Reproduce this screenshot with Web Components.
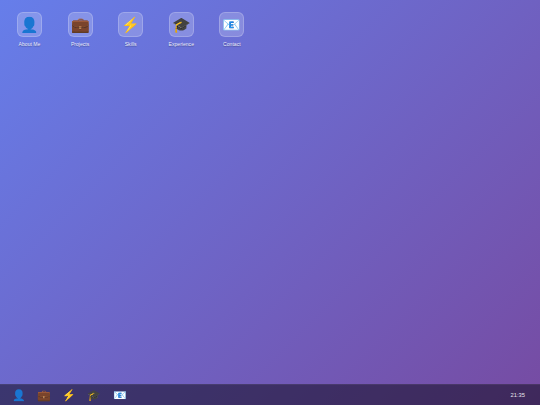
<!DOCTYPE html>
<html>
<head>
<meta charset="UTF-8">
<title>Desktop</title>
<style>
    html, body { margin: 0; height: 100%; overflow: hidden; }
    body { font-family: "Liberation Sans", Arial, sans-serif; }
</style>
</head>
<body>
<desk-top>
    <desk-icon glyph="👤" label="About Me"></desk-icon>
    <desk-icon glyph="💼" label="Projects"></desk-icon>
    <desk-icon glyph="⚡" label="Skills"></desk-icon>
    <desk-icon glyph="🎓" label="Experience"></desk-icon>
    <desk-icon glyph="📧" label="Contact"></desk-icon>
    <task-bar slot="bar" time="21:35">
        <task-item glyph="👤"></task-item>
        <task-item glyph="💼"></task-item>
        <task-item glyph="⚡"></task-item>
        <task-item glyph="🎓"></task-item>
        <task-item glyph="📧"></task-item>
    </task-bar>
</desk-top>
<script>
class DeskTop extends HTMLElement {
    constructor() {
        super();
        this.attachShadow({ mode: 'open' });
    }

    connectedCallback() {
        this.shadowRoot.innerHTML = `
            <style>
                :host { display: flex; flex-direction: column; height: 405px; width: 540px; background: linear-gradient(135deg, #667eea 0%, #764ba2 100%); }
                .icons { flex: 1; display: flex; align-items: flex-start; gap: 10px; padding: 12px 0 0 9.2px; }
            </style>
            <div class="icons"><slot></slot></div>
            <slot name="bar"></slot>
        `;
    }
}

class DeskIcon extends HTMLElement {
    constructor() {
        super();
        this.attachShadow({ mode: 'open' });
    }

    connectedCallback() {
        this.shadowRoot.innerHTML = `
            <style>
                :host { display: flex; flex-direction: column; align-items: center; width: 40.6px; gap: 4px; }
                .tile { box-sizing: border-box; width: 25px; height: 25px; border: 1px solid rgba(255,255,255,0.2); border-radius: 6px; background: rgba(255,255,255,0.2); display: flex; align-items: center; justify-content: center; font-size: 15px; line-height: 1; }
                .label { color: rgba(255,255,255,0.9); font-size: 5.1px; line-height: 6px; white-space: nowrap; text-shadow: 0 1px 1px rgba(0,0,0,0.3); }
            </style>
            <div class="tile">${this.getAttribute('glyph')}</div>
            <div class="label">${this.getAttribute('label')}</div>
        `;
    }
}

class TaskBar extends HTMLElement {
    constructor() {
        super();
        this.attachShadow({ mode: 'open' });
    }

    connectedCallback() {
        this.shadowRoot.innerHTML = `
            <style>
                :host { display: flex; align-items: center; justify-content: space-between; height: 20px; padding: 0 15px 0 8.4px; background: rgba(18,13,35,0.55); border-top: 1px solid rgba(255,255,255,0.06); }
                .items { display: flex; gap: 5px; }
                .clock { color: rgba(255,255,255,0.9); font-size: 5.8px; }
            </style>
            <div class="items"><slot></slot></div>
            <div class="clock">${this.getAttribute('time')}</div>
        `;
    }
}

class TaskItem extends HTMLElement {
    constructor() {
        super();
        this.attachShadow({ mode: 'open' });
    }

    connectedCallback() {
        this.shadowRoot.innerHTML = `
            <style>
                :host { display: flex; align-items: center; justify-content: center; width: 20.3px; height: 18px; font-size: 11px; line-height: 1; }
            </style>
            ${this.getAttribute('glyph')}
        `;
    }
}

customElements.define('desk-top', DeskTop);
customElements.define('desk-icon', DeskIcon);
customElements.define('task-bar', TaskBar);
customElements.define('task-item', TaskItem);
</script>
</body>
</html>
